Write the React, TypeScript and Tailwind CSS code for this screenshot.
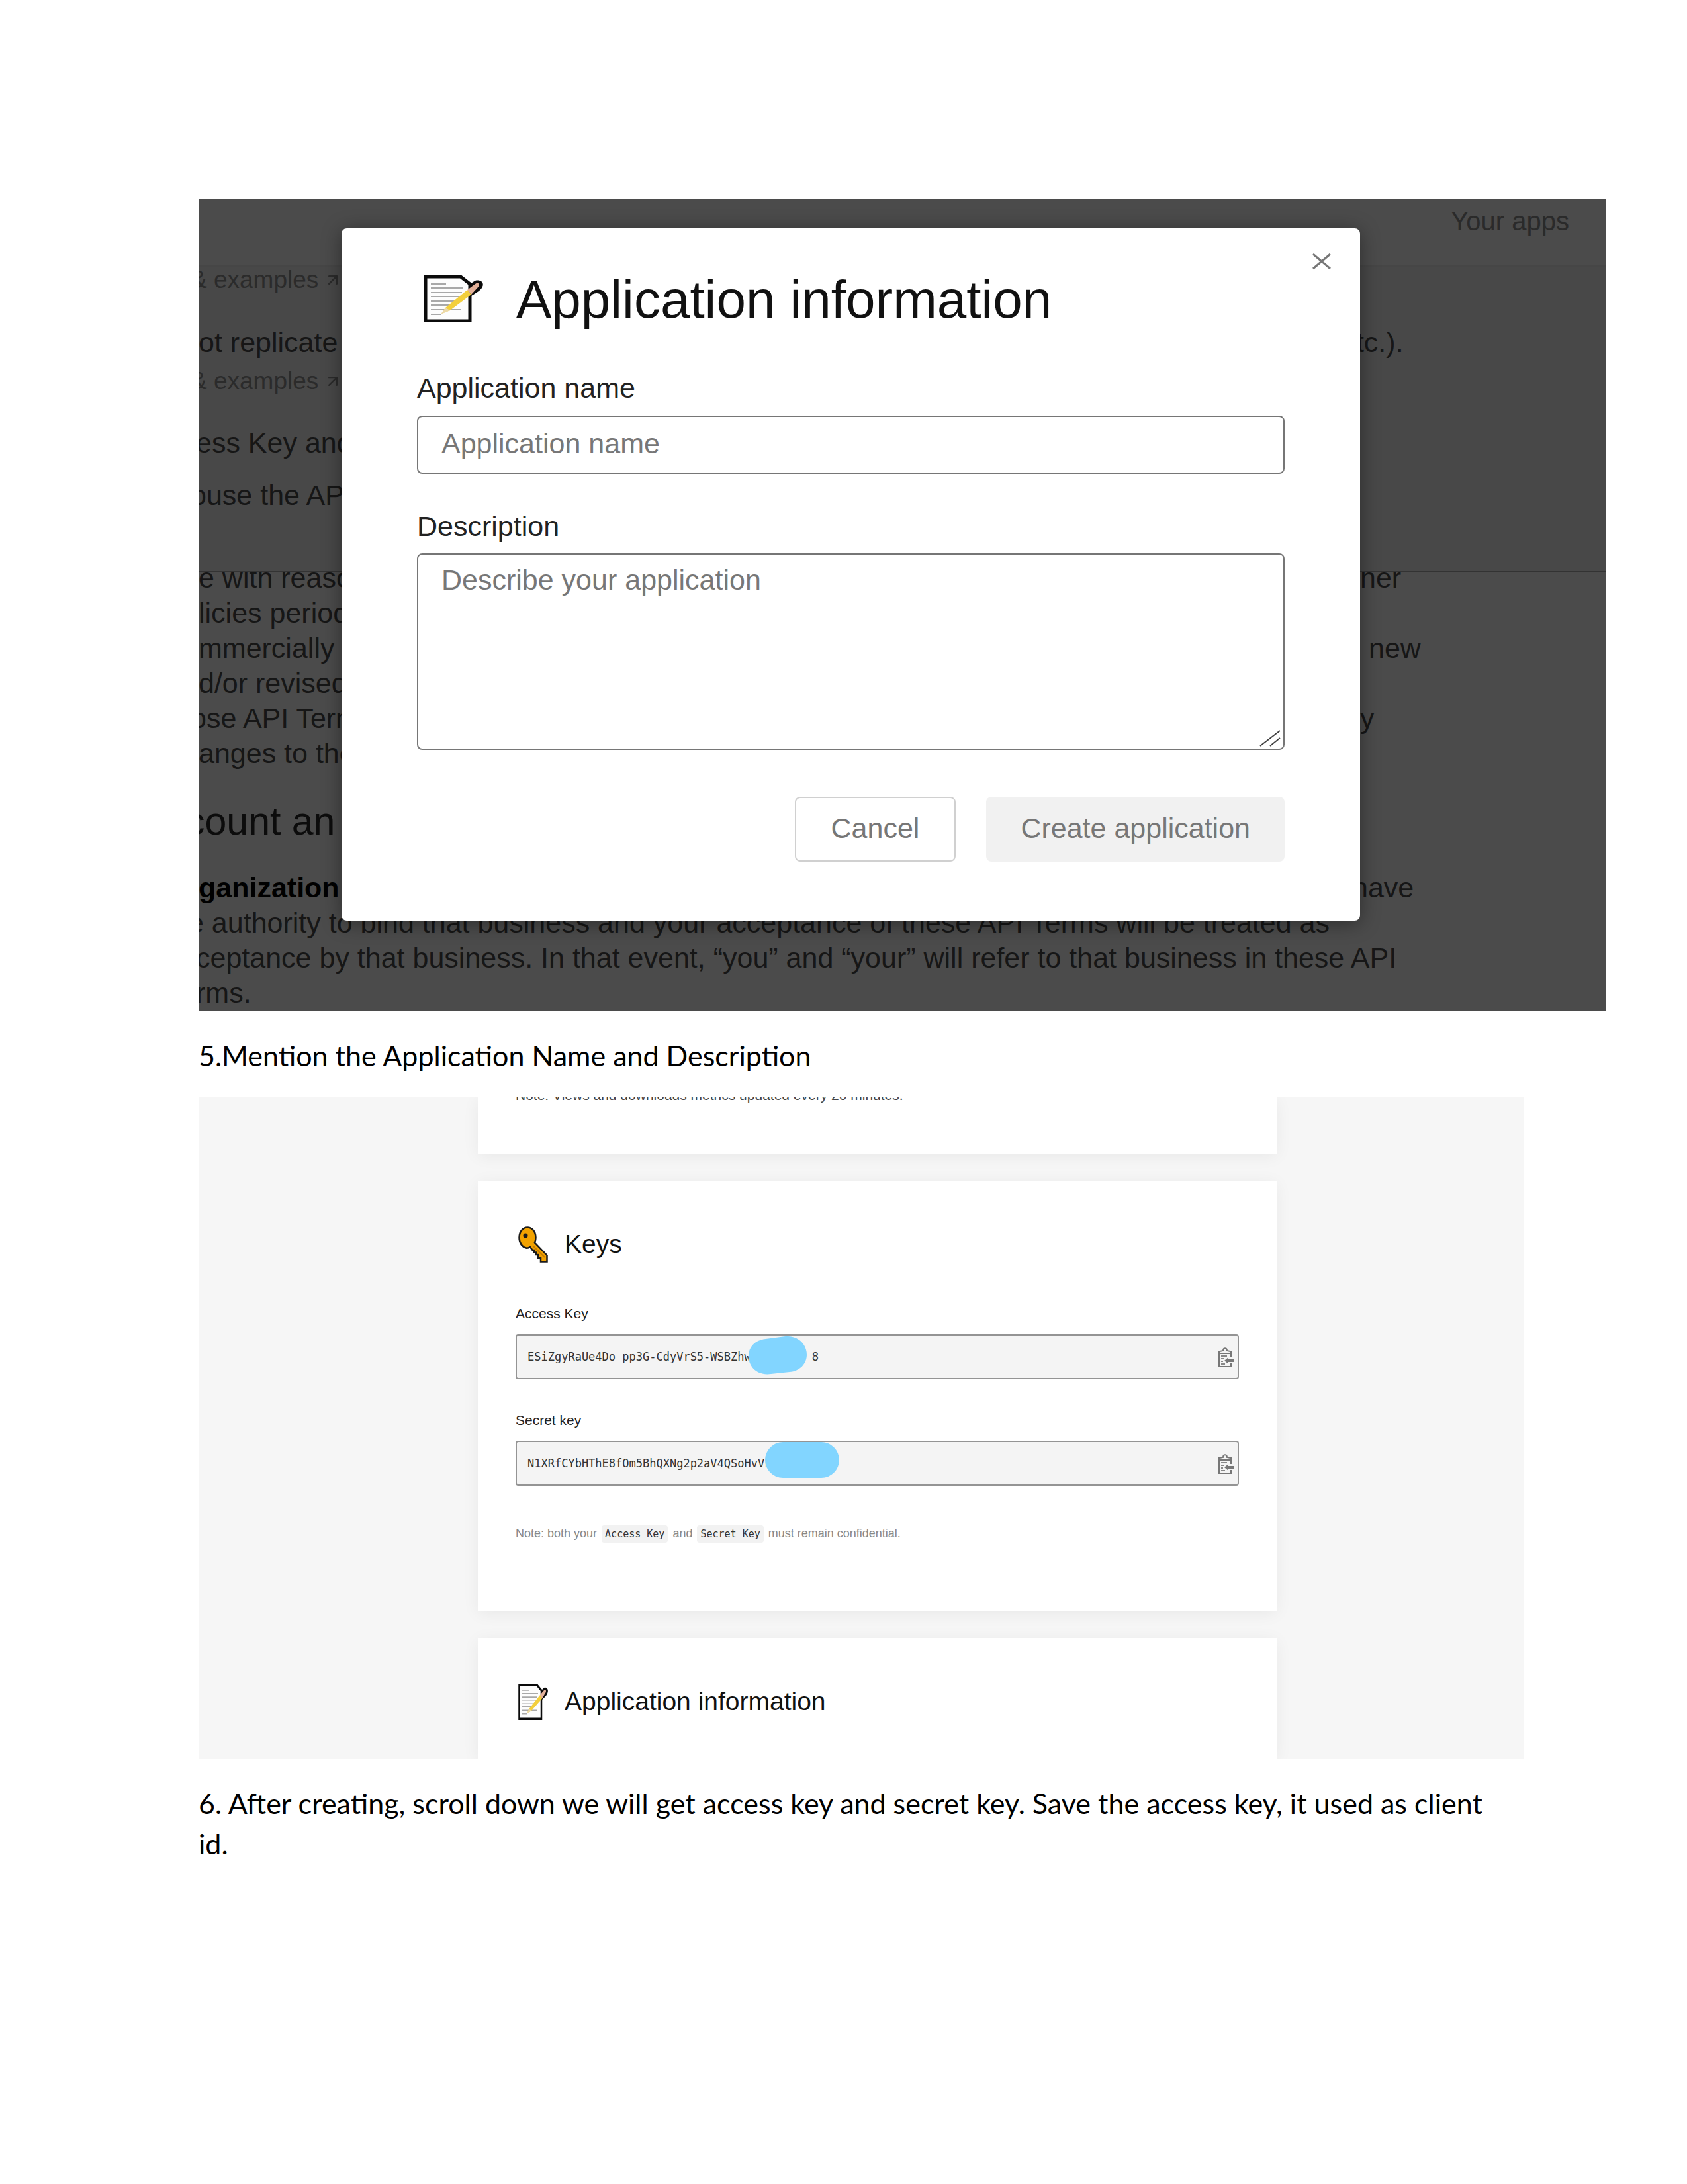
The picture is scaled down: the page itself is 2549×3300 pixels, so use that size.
import { ArrowUpRight } from "lucide-react";

function MemoIcon({ className }: { className: string }) {
  return (
    <svg className={className} viewBox="0 0 90 71" preserveAspectRatio="none" aria-hidden="true">
      <path d="M3 2H56L70 13V69H3Z" fill="#fdfdfd" stroke="#0b0b0b" strokeWidth="5" />
      <path d="M11 13H34M11 19H60M11 26H58M11 32H58M11 39H50M11 45H46M11 52H56M11 59H26" stroke="#a9a9a9" strokeWidth="2" />
      <path d="M56 2L70 13L78 8C86 6 92 11 89 17C87 22 82 25 72 31V14Z" fill="#0b0b0b" />
      <path d="M66 22L78 13C82 10 86 13 83 17L72 29Z" fill="#e3b098" />
      <path d="M66 22L72 29L40 53L27 58L33 49Z" fill="#f3cf3c" />
      <path d="M33 49L40 53L26 59Z" fill="#ecd9a8" />
    </svg>
  );
}

function KeyIcon({ className }: { className: string }) {
  return (
    <svg className={className} viewBox="0 0 45 55" preserveAspectRatio="none" aria-hidden="true">
      <path
        d="M14 1.5C21 1.5 26.500 8 26.500 17C26.500 20 26 22 25 24.500L43.500 44V53.500H34V48H30V43H27V39.500H24V36H21.500L18 31C16 32.500 14 33 12 32.500C6 31 1.500 25 1.500 17C1.500 8 7 1.500 14 1.500Z"
        fill="#f2a200"
        stroke="#1b1b1b"
        strokeWidth="2.500"
      />
      <circle cx="11" cy="14" r="3.500" fill="#1b1b1b" />
      <path d="M22 29L40 47" stroke="#c77d00" strokeWidth="2" />
    </svg>
  );
}

function ClipboardIcon() {
  return (
    <svg className="h-8 w-6" viewBox="0 0 24 32" fill="none" aria-hidden="true">
      <path d="M20 16V7H2V30H20V25" stroke="#777" strokeWidth="2" />
      <path d="M3 10V7L8 6C8 1 14 1 14 6L19 7V10Z" fill="#f4f4f4" stroke="#777" strokeWidth="2" />
      <path d="M5 14H14M5 18H9M5 22H8M5 26H11" stroke="#888" strokeWidth="2" />
      <path d="M10 21L16 16V19H24V23H16V26Z" fill="#777" />
    </svg>
  );
}

type Row = { left: React.ReactNode; right?: string; rightClass?: string };

function BackdropRow({ left, right, rightClass }: Row) {
  return (
    <div className="flex whitespace-nowrap text-[43px] leading-[53px]">
      <span className="min-w-0 flex-1">{left}</span>
      {right && <span className={rightClass}>{right}</span>}
    </div>
  );
}

function Examples() {
  return (
    <a href="#examples" className="-ml-3 flex items-center gap-2 whitespace-nowrap text-[37px] leading-10 text-[#2b2b2b]">
      &amp; examples <ArrowUpRight className="size-7" strokeWidth={2} />
    </a>
  );
}

function Backdrop() {
  return (
    <div className="col-start-1 row-start-1 overflow-hidden bg-[#4b4b4b] text-[#161616]">
      <div className="flex h-[103px] justify-end border-b-2 border-[#464646] pr-[55px] pt-3">
        <a href="#apps" className="text-[40px] leading-[44px] text-[#2a2a2a]">Your apps</a>
      </div>
      <div className="border-b-2 border-[#333] bg-[#484848] pb-[88px]">
        <Examples />
        <div className="mt-12">
          <BackdropRow left="ot replicate" right="etc.)." rightClass="w-[401px]" />
        </div>
        <div className="mt-3">
          <Examples />
        </div>
        <div className="-ml-1 mt-[47px]">
          <BackdropRow left="ess Key and" />
        </div>
        <div className="-ml-3 mt-[26px]">
          <BackdropRow left="ouse the API" />
        </div>
      </div>
      <div className="overflow-hidden">
        <div className="-mt-[18px] pb-px">
          <BackdropRow left="e with reaso" right="her" rightClass="w-[371px]" />
          <BackdropRow left="licies period" />
          <BackdropRow left="mmercially re" right="new" rightClass="w-[358px]" />
          <BackdropRow left="d/or revised" />
          <div className="-ml-3">
            <BackdropRow left="ose API Term" right="y" rightClass="w-[371px]" />
          </div>
          <BackdropRow left="anges to the" />
          <h2 className="-ml-5 mb-[42px] mt-11 whitespace-nowrap text-[59px] leading-[64px] text-[#0c0c0c]">count an</h2>
          <BackdropRow left={<b className="text-black">ganization</b>} right="have" rightClass="w-[383px]" />
          <div className="-ml-4">
            <BackdropRow left="e authority to bind that business and your acceptance of these API Terms will be treated as" />
          </div>
          <div className="-ml-1">
            <BackdropRow left="ceptance by that business. In that event, “you” and “your” will refer to that business in these API" />
          </div>
          <div className="-ml-1">
            <BackdropRow left="rms." />
          </div>
        </div>
      </div>
    </div>
  );
}

function ApplicationDialog() {
  return (
    <form
      role="dialog"
      aria-labelledby="dialog-title"
      onSubmit={(e) => e.preventDefault()}
      className="relative col-start-1 row-start-1 ml-[216px] mr-[371px] mt-[45px] flex flex-col self-start rounded-lg bg-white px-[114px] pb-[89px] pt-[68px] text-[43px] leading-[48px] text-[#222] shadow-[0_4px_30px_rgba(0,0,0,0.4)]"
    >
      <button type="button" aria-label="Close" className="absolute right-[42px] top-[36px] p-0">
        <svg className="h-7 w-8" viewBox="0 0 32 28" aria-hidden="true">
          <path d="M3 3L29 25M29 3L3 25" stroke="#777" strokeWidth="3" />
        </svg>
      </button>
      <div className="flex items-start gap-[50px] pl-[10px]">
        <MemoIcon className="mt-[3px] h-[71px] w-[90px]" />
        <h1 id="dialog-title" className="whitespace-nowrap text-[80px] leading-[80px] text-[#111]">Application information</h1>
      </div>
      <label htmlFor="app-name" className="mb-[18px] mt-[69px]">Application name</label>
      <input
        id="app-name"
        type="text"
        placeholder="Application name"
        className="h-[88px] w-full rounded-lg border-2 border-[#767676] px-[35px] pb-1 placeholder:text-[#777]"
      />
      <label htmlFor="app-description" className="mb-[17px] mt-[55px]">Description</label>
      <div className="relative">
        <textarea
          id="app-description"
          placeholder="Describe your application"
          className="block h-[297px] w-full resize-none rounded-lg border-2 border-[#767676] px-[35px] py-[14px] placeholder:text-[#777]"
        />
        <svg className="absolute bottom-1 right-1 h-7 w-9" viewBox="0 0 36 28" aria-hidden="true">
          <path d="M3 26L33 3M18 26L33 14" stroke="#444" strokeWidth="2" />
        </svg>
      </div>
      <div className="mt-[71px] flex justify-end gap-[46px] text-[#777]">
        <button type="button" className="h-[98px] rounded-lg border-2 border-[#d0d0d0] px-[53px] pb-1">Cancel</button>
        <button type="submit" className="h-[98px] rounded-lg bg-[#f1f1f1] px-[52px] pb-1">Create application</button>
      </div>
    </form>
  );
}

function KeyField({ id, label, value, blob }: { id: string; label: string; value: string; blob: React.ReactNode }) {
  return (
    <div>
      <label htmlFor={id} className="mb-[17px] block text-[21px] leading-7 text-[#222]">{label}</label>
      <div className="relative">
        <input
          id={id}
          readOnly
          value={value}
          className="block h-[68px] w-full rounded border-2 border-[#949494] bg-[#f4f4f4] pl-4 pr-16 font-['DejaVu_Sans_Mono',monospace] text-[17px] text-[#333]"
        />
        {blob}
        <button type="button" aria-label={`Copy ${label}`} className="absolute right-2 top-[19px]">
          <ClipboardIcon />
        </button>
      </div>
    </div>
  );
}

const card = "bg-white px-[57px] shadow-[0_4px_24px_rgba(0,0,0,0.06)]";
const cardTitle = "flex items-center gap-[25px] pl-1 text-[39px] leading-[56px] text-[#111]";
const code = "mx-0.5 rounded bg-[#f2f2f2] px-[5px] py-1 font-['DejaVu_Sans_Mono',monospace] text-[15px] text-[#333]";

export default function App() {
  return (
    <main className="bg-white pb-[480px] pl-[300px] pt-[300px] font-['Liberation_Sans',Arial,sans-serif]">
      <section className="mr-[123px] grid grid-cols-1">
        <Backdrop />
        <ApplicationDialog />
      </section>

      <p className="mr-[300px] mt-9 font-['Lato',sans-serif] text-[43px] leading-[61px] text-black">
        5.Mention the Application Name and Description
      </p>

      <section className="mr-[246px] mt-[33px] flex flex-col gap-[41px] overflow-hidden bg-[#f6f6f6] pl-[422px] pr-[374px]">
        <div className={`${card} pb-[76px]`}>
          <p className="-mt-[15px] whitespace-nowrap text-[21px] leading-6 text-[#444]">
            Note: Views and downloads metrics updated every 20 minutes.
          </p>
        </div>
        <div className={`${card} pb-[101px] pt-[68px]`}>
          <h2 className={cardTitle}>
            <KeyIcon className="h-[55px] w-[45px]" />
            Keys
          </h2>
          <div className="mt-[63px] flex flex-col gap-[48px]">
            <KeyField
              id="access-key"
              label="Access Key"
              value={"ESiZgyRaUe4Do_pp3G-CdyVrS5-WSBZhw         8"}
              blob={
                <svg className="absolute left-[352px] top-[3px] h-[58px] w-[88px]" viewBox="0 0 88 58" aria-hidden="true">
                  <path d="M26 4L56 0C76-1 88 13 88 28C88 42 77 53 62 54L34 57C13 60 0 46 0 30C0 17 9 6 26 4Z" fill="#82d5ff" />
                </svg>
              }
            />
            <KeyField
              id="secret-key"
              label="Secret key"
              value="N1XRfCYbHThE8fOm5BhQXNg2p2aV4QSoHvVk"
              blob={<span className="absolute left-[377px] top-[2px] h-[54px] w-[112px] rounded-[27px] bg-[#82d5ff]" />}
            />
          </div>
          <p className="mt-[57px] whitespace-nowrap text-[18px] leading-[30px] text-[#888]">
            Note: both your <code className={code}>Access Key</code> and <code className={code}>Secret Key</code> must remain confidential.
          </p>
        </div>
        <div className={`${card} pb-[59px] pt-[68px]`}>
          <h2 className={cardTitle}>
            <MemoIcon className="h-[55px] w-[45px]" />
            Application information
          </h2>
        </div>
      </section>

      <p className="mr-[300px] mt-9 font-['Lato',sans-serif] text-[43px] leading-[61px] text-black">
        6. After creating, scroll down we will get access key and secret key. Save the access key, it used as client id.
      </p>
    </main>
  );
}
